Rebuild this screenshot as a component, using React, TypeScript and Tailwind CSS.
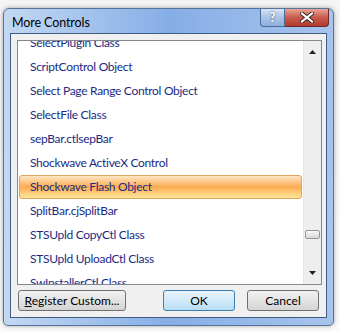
import React from 'react';

const items = [
  'SelectPlugin Class',
  'ScriptControl Object',
  'Select Page Range Control Object',
  'SelectFile Class',
  'sepBar.ctlsepBar',
  'Shockwave ActiveX Control',
  'Shockwave Flash Object',
  'SplitBar.cjSplitBar',
  'STSUpld CopyCtl Class',
  'STSUpld UploadCtl Class',
  'SwInstallerCtl Class',
];

const font = { fontFamily: '"Segoe UI", Lato, "Noto Sans", sans-serif' };

const App: React.FC = () => {
  return (
    <div
      className="h-[332px] w-[340px] overflow-hidden bg-gradient-to-b from-[#f4f4f4] to-[#fafafa] pl-[3px] pt-[8px]"
      style={font}
    >
      {/* window frame */}
      <div className="flex h-[318px] w-[331px] flex-col rounded-t-[6px] rounded-b-[5px] border border-[#55739b] bg-gradient-to-r from-[#c3d8f2] via-[#86aee6] to-[#a7c4ec] shadow-[0_0_4px_rgba(0,0,0,0.35)]">
        <header className="flex h-[24px] items-start">
          <span className="pl-[8px] pt-[6px] text-[12.5px] leading-[16px] tracking-[-0.1px] text-black">More Controls</span>
          <div className="ml-auto mr-[4px] flex">
            <div className="flex h-[18px] w-[25px] items-center justify-center rounded-bl-[4px] border border-t-0 border-[#4b6b96] bg-gradient-to-b from-[#d6e4f6] via-[#a9c3e6] to-[#8fb0de] text-[13px] font-bold leading-none text-white [text-shadow:0_0_2px_#2a3e5c]">
              ?
            </div>
            <div className="flex h-[18px] w-[44px] items-center justify-center rounded-br-[4px] border border-l-0 border-t-0 border-[#6d2a2a] bg-gradient-to-b from-[#e8a493] via-[#c75a4c] to-[#b13a2e]">
              <svg width="14" height="11" viewBox="0 0 14 11">
                <path
                  d="M2 1.5 L12 9.5 M12 1.5 L2 9.5"
                  stroke="#3a2020"
                  strokeWidth="4"
                  strokeLinecap="square"
                />
                <path
                  d="M2 1.5 L12 9.5 M12 1.5 L2 9.5"
                  stroke="#ffffff"
                  strokeWidth="2.2"
                  strokeLinecap="square"
                />
              </svg>
            </div>
          </div>
        </header>

        {/* dialog body */}
        <main className="mx-[6px] flex h-[285px] flex-col border border-[#3f5c82] bg-[#f0f0f0] pl-[6px] pr-[4px] pt-[6px]">
          <div className="flex h-[245px] border border-[#828790] bg-white">
            <ul className="flex-1 overflow-hidden">
              <div className="mt-[-10px]">
                {items.map((item, i) => (
                  <li
                    key={item}
                    className={
                      i === 6
                        ? 'mx-[1px] flex h-[24px] items-center rounded-[3px] border border-[#e0a35a] bg-gradient-to-b from-[#fde6c2] via-[#fbab4e] to-[#fde79c] pl-[10px] text-[12px] tracking-[-0.3px] text-[#1b2b84]'
                        : 'mx-[1px] flex h-[24px] items-center border border-transparent pl-[10px] text-[12px] tracking-[-0.3px] text-[#1b2b84]'
                    }
                  >
                    {item}
                  </li>
                ))}
              </div>
            </ul>
            {/* scrollbar */}
            <div className="flex w-[18px] flex-col items-center border-l border-[#e6e6e6] bg-[#eeeeee] py-[9px]">
              <svg width="7" height="4" viewBox="0 0 7 4">
                <path d="M3.5 0 L7 4 L0 4 Z" fill="#222" />
              </svg>
              <div className="mt-[176px] h-[9px] w-[15px] rounded-[2px] border border-[#979797] bg-gradient-to-b from-[#f7f7f7] to-[#d8d8d8]" />
              <svg className="mt-[32px]" width="7" height="4" viewBox="0 0 7 4">
                <path d="M0 0 L7 0 L3.5 4 Z" fill="#222" />
              </svg>
            </div>
          </div>

          <div className="mt-[5px] flex text-[12px] text-black">
            <button className="ml-[1px] h-[21px] w-[108px] rounded-[3px] border border-[#707070] bg-gradient-to-b from-[#f2f2f2] to-[#d4d4d4]">
              <span className="underline">R</span>egister Custom...
            </button>
            <button className="ml-[37px] h-[21px] w-[72px] rounded-[3px] border border-[#3c7fb1] bg-gradient-to-b from-[#e9f5fd] to-[#b9def4]">
              OK
            </button>
            <button className="ml-[12px] h-[21px] w-[72px] rounded-[3px] border border-[#707070] bg-gradient-to-b from-[#f2f2f2] to-[#d4d4d4]">
              Cancel
            </button>
          </div>
        </main>
      </div>
    </div>
  );
};

export default App;
